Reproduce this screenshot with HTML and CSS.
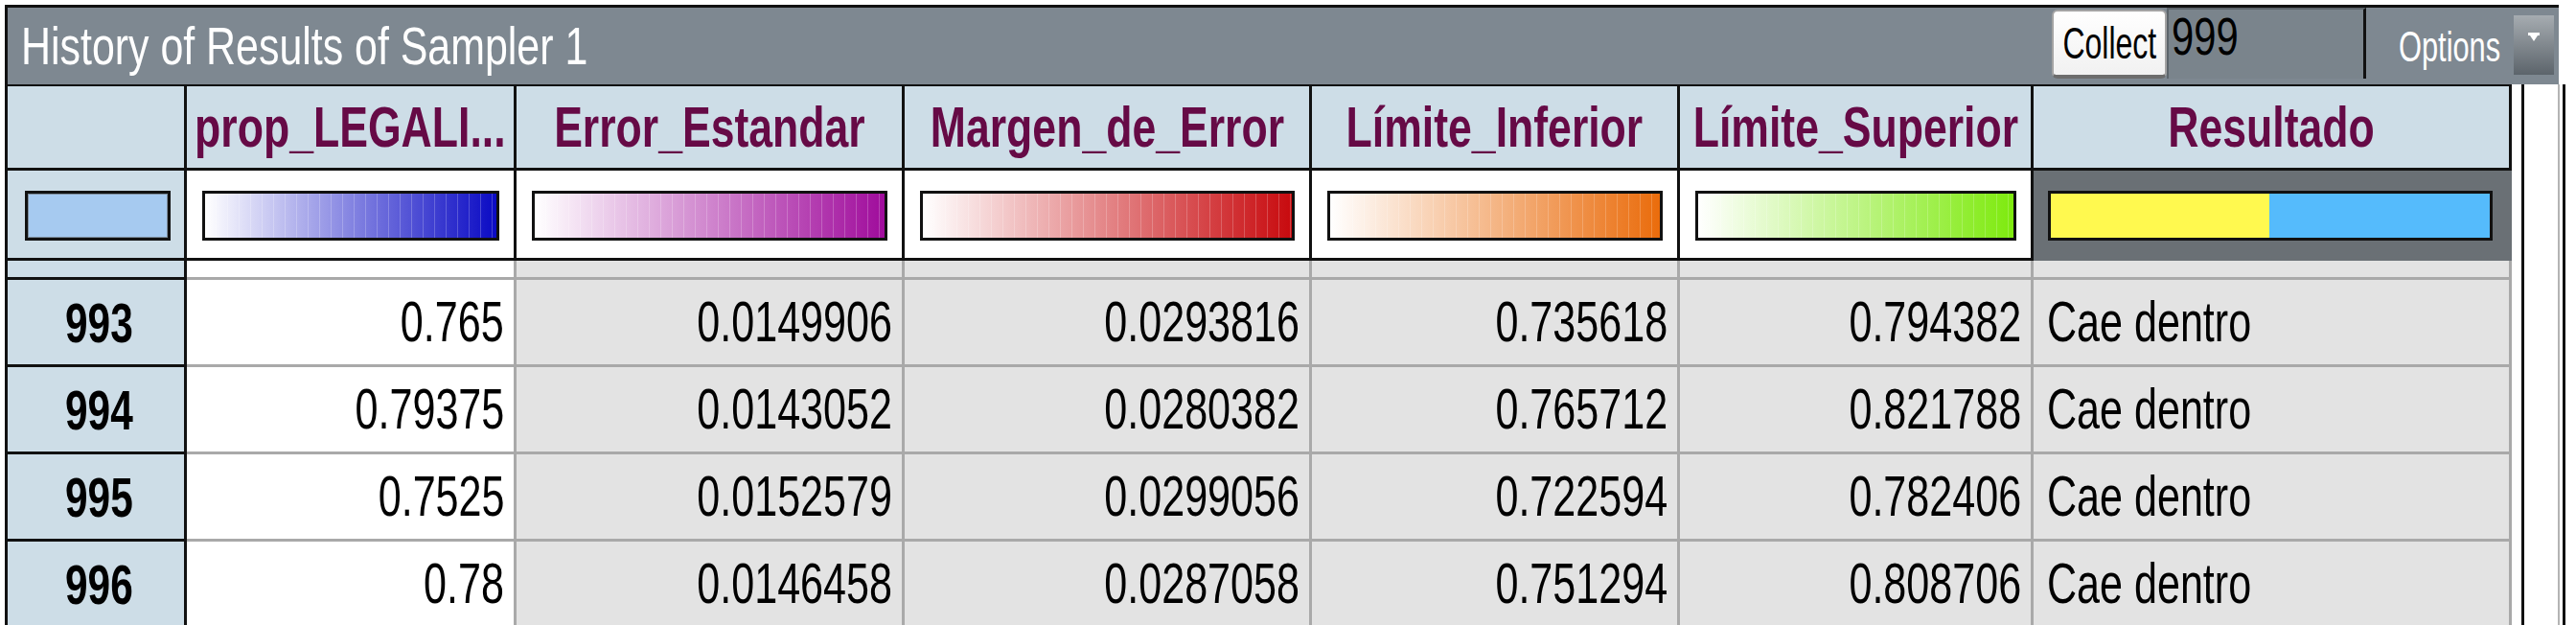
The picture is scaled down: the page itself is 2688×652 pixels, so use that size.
FILE: index.html
```html
<!DOCTYPE html>
<html lang="en">
<head>
<meta charset="utf-8">
<title>History of Results of Sampler 1</title>
<link rel="stylesheet" href="styles.css">
</head>
<body>
<div class="widget">
  <div class="titlebar">
    <div class="title"><span class="sx">History of Results of Sampler 1</span></div>
    <button class="collect"><span class="sx mid">Collect</span></button>
    <div class="count"><span class="sx">999</span></div>
    <div class="opt-label"><span class="sx">Options</span></div>
    <div class="opt-btn">
      <svg width="12" height="10" viewBox="0 0 12 10"><path d="M0 0H12V3H0Z M2 3H10L6 9Z" fill="#fff"/></svg>
    </div>
  </div>
  <div class="main">
    <div class="grid">
      <div class="c h idx"></div>
      <div class="c h"><span class="sx mid">prop_LEGALI...</span></div>
      <div class="c h"><span class="sx mid">Error_Estandar</span></div>
      <div class="c h"><span class="sx mid">Margen_de_Error</span></div>
      <div class="c h"><span class="sx mid">Límite_Inferior</span></div>
      <div class="c h"><span class="sx mid">Límite_Superior</span></div>
      <div class="c h"><span class="sx mid">Resultado</span></div>

      <div class="c b idx"><div class="bar bar-idx"></div></div>
      <div class="c b"><div class="bar bar-blue"></div></div>
      <div class="c b"><div class="bar bar-purple"></div></div>
      <div class="c b"><div class="bar bar-red"></div></div>
      <div class="c b"><div class="bar bar-orange"></div></div>
      <div class="c b"><div class="bar bar-green"></div></div>
      <div class="c b res"><div class="bar bar-res"></div></div>

      <div class="c s idx"></div>
      <div class="c s prop"></div>
      <div class="c s"></div>
      <div class="c s"></div>
      <div class="c s"></div>
      <div class="c s"></div>
      <div class="c s"></div>

      <div class="c d idx"><span class="sx mid">993</span></div>
      <div class="c d prop"><span class="sx">0.765</span></div>
      <div class="c d"><span class="sx">0.0149906</span></div>
      <div class="c d"><span class="sx">0.0293816</span></div>
      <div class="c d"><span class="sx">0.735618</span></div>
      <div class="c d"><span class="sx">0.794382</span></div>
      <div class="c d res"><span class="sx left">Cae dentro</span></div>

      <div class="c d idx"><span class="sx mid">994</span></div>
      <div class="c d prop"><span class="sx">0.79375</span></div>
      <div class="c d"><span class="sx">0.0143052</span></div>
      <div class="c d"><span class="sx">0.0280382</span></div>
      <div class="c d"><span class="sx">0.765712</span></div>
      <div class="c d"><span class="sx">0.821788</span></div>
      <div class="c d res"><span class="sx left">Cae dentro</span></div>

      <div class="c d idx"><span class="sx mid">995</span></div>
      <div class="c d prop"><span class="sx">0.7525</span></div>
      <div class="c d"><span class="sx">0.0152579</span></div>
      <div class="c d"><span class="sx">0.0299056</span></div>
      <div class="c d"><span class="sx">0.722594</span></div>
      <div class="c d"><span class="sx">0.782406</span></div>
      <div class="c d res"><span class="sx left">Cae dentro</span></div>

      <div class="c d idx"><span class="sx mid">996</span></div>
      <div class="c d prop"><span class="sx">0.78</span></div>
      <div class="c d"><span class="sx">0.0146458</span></div>
      <div class="c d"><span class="sx">0.0287058</span></div>
      <div class="c d"><span class="sx">0.751294</span></div>
      <div class="c d"><span class="sx">0.808706</span></div>
      <div class="c d res"><span class="sx left">Cae dentro</span></div>
    </div>
    <div class="scroll"><div class="thumb"></div></div>
  </div>
</div>
</body>
</html>
```
FILE: styles.css
```css
html, body {
  margin: 0;
  height: 652px;
  overflow: hidden;
  background: #fff;
  font-family: "Liberation Sans", Arial, sans-serif;
}

.widget {
  margin: 5px 0 0 5px;
  border-left: 3px solid #111;
  width: 2672px;
}

.sx {
  display: inline-block;
  white-space: nowrap;
  transform: scaleX(0.73);
  transform-origin: right center;
}
.sx.mid { transform-origin: center center; }
.sx.left { transform-origin: left center; }

/* ---------- title bar ---------- */
.titlebar {
  display: flex;
  box-sizing: border-box;
  width: 2662px;
  height: 83px;
  border-top: 3px solid #111;
  padding-right: 5px;
  background: #7e8891;
}

.title {
  flex: 1;
  padding-left: 14px;
  color: #fff;
  font-size: 55px;
  line-height: 80px;
  white-space: nowrap;
}
.title .sx {
  transform: scaleX(0.78);
  transform-origin: left center;
}

.collect {
  box-sizing: border-box;
  width: 120px;
  height: 72px;
  margin-top: 2px;
  padding: 0;
  display: flex;
  align-items: center;
  justify-content: center;
  background: linear-gradient(#ffffff, #f1f1f1);
  border: 2px solid #a4a4a4;
  border-bottom: 4px solid #6c6c6c;
  border-radius: 6px;
  font-family: inherit;
  font-size: 46px;
  color: #000;
}
.collect .sx { transform: scaleX(0.695); }

.count {
  box-sizing: border-box;
  width: 208px;
  height: 74px;
  border-top: 2px solid #5d656b;
  border-left: 2px solid #5d656b;
  border-right: 3px solid #111;
  background: #7a848c;
  padding-left: 3px;
  font-size: 55px;
  line-height: 57px;
  color: #000;
  overflow: hidden;
}
.count .sx {
  transform: scaleX(0.76);
  transform-origin: left center;
}

.opt-label {
  width: 110px;
  margin-left: 34px;
  color: #fff;
  font-size: 44px;
  line-height: 82px;
  white-space: nowrap;
}
.opt-label .sx {
  transform: scaleX(0.70);
  transform-origin: left center;
}

.opt-btn {
  box-sizing: border-box;
  width: 42px;
  height: 62px;
  margin: 8px 0 0 10px;
  padding-top: 18px;
  display: flex;
  justify-content: center;
  align-items: flex-start;
  background: linear-gradient(#a6acb1, #5c646b);
}

/* ---------- table ---------- */
.main {
  display: flex;
}

.grid {
  display: grid;
  grid-template-columns: 187px 344px 405px 425px 384px 369px 499px;
  grid-template-rows: 88px 94px 20px repeat(4, 91px);
  width: 2613px;
  border-top: 2px solid #111;
}

.c {
  box-sizing: border-box;
  display: flex;
  align-items: center;
  overflow: hidden;
  border-right: 3px solid #a9a9a9;
  border-bottom: 3px solid #a9a9a9;
}

/* header row */
.h {
  justify-content: center;
  background: #cddde7;
  border-color: #111;
  color: #660a46;
  font-weight: bold;
  font-size: 60px;
}
.h .sx { transform: scaleX(0.743); }

/* colour bar row */
.b {
  background: #fff;
  border-color: #111;
  padding: 3px 15px 0 16px;
}
.b.idx {
  background: #cddde7;
  padding: 3px 14px 0 18px;
}
.b.res {
  background: #6a7075;
  border-color: #6a7075;
  padding: 3px 17px 0 15px;
}

.bar {
  flex: 1;
  box-sizing: border-box;
  height: 52px;
  border: 3px solid #111;
}
.bar-idx { background: #a6caf0; box-shadow: inset 0 0 0 1px #7d8d9c; }
.bar-blue {
  background:
    repeating-linear-gradient(90deg, rgba(255,255,255,0) 0 11px, rgba(255,255,255,.22) 11px 12px),
    linear-gradient(90deg, #ffffff, #0a0ac4);
}
.bar-purple {
  background:
    repeating-linear-gradient(90deg, rgba(255,255,255,0) 0 11px, rgba(255,255,255,.22) 11px 12px),
    linear-gradient(90deg, #ffffff, #a00c9c);
}
.bar-red {
  background:
    repeating-linear-gradient(90deg, rgba(255,255,255,0) 0 11px, rgba(255,255,255,.22) 11px 12px),
    linear-gradient(90deg, #ffffff, #c80a0e);
}
.bar-orange {
  background:
    repeating-linear-gradient(90deg, rgba(255,255,255,0) 0 11px, rgba(255,255,255,.2) 11px 12px),
    linear-gradient(90deg, #ffffff, #ea6c0c);
}
.bar-green {
  background:
    repeating-linear-gradient(90deg, rgba(255,255,255,0) 0 11px, rgba(255,255,255,.2) 11px 12px),
    linear-gradient(90deg, #ffffff, #7eea0e);
}
.bar-res {
  background: linear-gradient(90deg, #fff94f 0 49.7%, #55bbfc 49.7% 100%);
}

/* spacer row */
.s { background: #e3e3e3; }
.s.prop { background: #fff; }
.s.idx { background: #cddde7; border-color: #111; }

/* data rows */
.d {
  justify-content: flex-end;
  padding-right: 10px;
  background: #e3e3e3;
  color: #000;
  font-size: 59px;
}
.d.prop { background: #fff; }
.d.idx {
  justify-content: center;
  padding-right: 0;
  padding-left: 6px;
  background: #cddde7;
  border-color: #111;
  font-weight: bold;
  font-size: 58px;
}
.d.res {
  justify-content: flex-start;
  padding-left: 14px;
  padding-right: 0;
}

/* scrollbar */
.scroll {
  box-sizing: border-box;
  width: 46px;
  height: 564px;
  margin-left: 10px;
  border-left: 3px solid #111;
  border-right: 3px solid #111;
  background: #fff;
}
.thumb {
  box-sizing: border-box;
  width: 37px;
  height: 100%;
  border-right: 2px solid #b4b4b4;
}
```
